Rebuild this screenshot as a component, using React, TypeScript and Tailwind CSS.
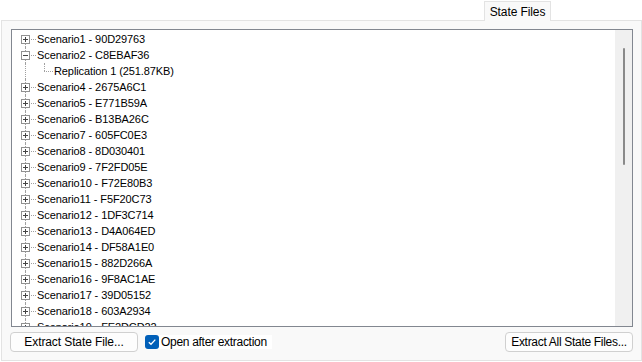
import React from 'react';

type Node = { label: string; expanded?: boolean; children?: string[] };

const nodes: Node[] = [
    { label: 'Scenario1 - 90D29763' },
    { label: 'Scenario2 - C8EBAF36', expanded: true, children: ['Replication 1 (251.87KB)'] },
    { label: 'Scenario4 - 2675A6C1' },
    { label: 'Scenario5 - E771B59A' },
    { label: 'Scenario6 - B13BA26C' },
    { label: 'Scenario7 - 605FC0E3' },
    { label: 'Scenario8 - 8D030401' },
    { label: 'Scenario9 - 7F2FD05E' },
    { label: 'Scenario10 - F72E80B3' },
    { label: 'Scenario11 - F5F20C73' },
    { label: 'Scenario12 - 1DF3C714' },
    { label: 'Scenario13 - D4A064ED' },
    { label: 'Scenario14 - DF58A1E0' },
    { label: 'Scenario15 - 882D266A' },
    { label: 'Scenario16 - 9F8AC1AE' },
    { label: 'Scenario17 - 39D05152' },
    { label: 'Scenario18 - 603A2934' },
    { label: 'Scenario19 - FE2DCD22' },
];

// Plus / minus expander box
function Expander({ open }: { open?: boolean }) {
    return (
        <div className="relative w-[9px] h-[9px] border border-[#919191] bg-white flex items-center justify-center">
            <div className="w-[5px] h-px bg-[#444]" />
            {!open && <div className="absolute w-px h-[5px] bg-[#444]" />}
        </div>
    );
}

function TreeRow({ node, first }: { node: Node; first: boolean }) {
    return (
        <>
            <div className="flex h-[16px] items-center pl-[9px]">
                {/* expander column with connecting dotted line */}
                <div className="relative w-[9px] h-full flex items-center">
                    <div
                        className={`absolute left-[4px] w-0 border-l border-dotted border-[#a0a0a0] ${first ? 'top-[8px]' : 'top-0'} bottom-0`}
                    />
                    <Expander open={node.expanded} />
                </div>
                <div className="w-[5px] ml-px border-t border-dotted border-[#a0a0a0]" />
                <span className="ml-[1px] leading-none whitespace-nowrap">{node.label}</span>
            </div>
            {node.children?.map((c) => (
                <div key={c} className="flex h-[16px] items-center pl-[9px]">
                    <div className="relative w-[9px] h-full">
                        <div className="absolute left-[4px] top-0 bottom-0 border-l border-dotted border-[#a0a0a0]" />
                    </div>
                    <div className="relative w-[23px] h-full">
                        <div className="absolute left-[14px] top-0 h-[8px] border-l border-dotted border-[#a0a0a0]" />
                        <div className="absolute left-[14px] top-[8px] w-[9px] border-t border-dotted border-[#a0a0a0]" />
                    </div>
                    <span className="ml-[1px] leading-none whitespace-nowrap">{c}</span>
                </div>
            ))}
        </>
    );
}

export default function App() {
    return (
        <div
            className="w-[642px] h-[362px] bg-white flex flex-col text-[11px] tracking-[-0.1px] text-black overflow-hidden"
            style={{ fontFamily: '"Liberation Sans", Arial, sans-serif' }}
        >
            {/* Tab strip */}
            <div className="h-[20px] flex items-end justify-end pr-[91px]">
                <div className="w-[67px] h-[20px] bg-[#f9f9f9] border border-b-0 border-[#e3e3e3] flex items-center justify-center -mb-px relative z-10 text-[12px]">
                    State Files
                </div>
            </div>

            {/* Panel */}
            <div className="ml-px w-[641px] h-[341px] bg-[#f9f9f9] border border-[#e3e3e3] pt-[8px] pl-[9px]">
                {/* List box */}
                <div className="w-[622px] h-[298px] border border-[#828790] bg-white flex overflow-hidden">
                    <div className="flex-1 pt-px overflow-hidden">
                        {nodes.map((n, i) => (
                            <TreeRow key={n.label} node={n} first={i === 0} />
                        ))}
                    </div>
                    {/* Scrollbar */}
                    <div className="w-[17px] h-full bg-[#f0f0f0] pt-[18px] flex justify-center">
                        <div className="w-[2px] h-[117px] bg-[#8a8a8a] rounded-full" />
                    </div>
                </div>

                {/* Bottom actions */}
                <div className="flex items-center mt-[5px] w-[622px] text-[12px]">
                    <button className="w-[128px] h-[20px] -ml-px rounded-[4px] border border-[#d0d0d0] bg-[#fdfdfd] flex items-center justify-center leading-none">
                        Extract State File...
                    </button>
                    <label className="ml-[7px] flex items-center bg-white pr-[5px]">
                        <span className="w-[14px] h-[14px] rounded-[3px] bg-[#005fb8] flex items-center justify-center">
                            <svg width="10" height="10" viewBox="0 0 10 10">
                                <path d="M1.8 5.2 L4 7.3 L8.3 2.6" fill="none" stroke="white" strokeWidth="1.3" />
                            </svg>
                        </span>
                        <span className="ml-[2px] leading-none tracking-[-0.3px]">Open after extraction</span>
                    </label>
                    <button className="ml-auto w-[128px] h-[20px] rounded-[4px] border border-[#d0d0d0] bg-[#fdfdfd] flex items-center justify-center leading-none tracking-[-0.3px]">
                        Extract All State Files...
                    </button>
                </div>
            </div>
        </div>
    );
}
